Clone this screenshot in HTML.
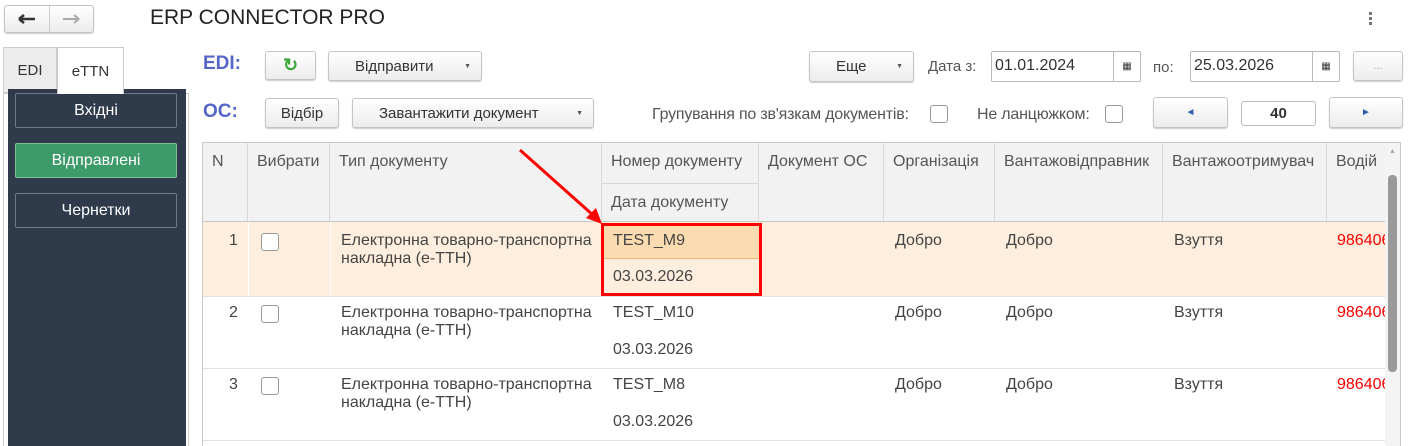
<!DOCTYPE html>
<html><head><meta charset="utf-8"><style>
*{box-sizing:border-box;margin:0;padding:0}
html,body{width:1408px;height:446px;overflow:hidden}
body{background:#fff;font-family:"Liberation Sans",Arial,sans-serif;font-size:15px;color:#444;position:relative}
.a{position:absolute}
.btn{position:absolute;border:1px solid #c4c4c4;border-radius:3px;background:linear-gradient(#fff,#ececec);box-shadow:0 1px 1px rgba(0,0,0,.2);display:flex;align-items:center;justify-content:center;color:#333;font-size:15px}
.dd{position:absolute;right:10px;font-size:7px;color:#555}
.inp{position:absolute;border:1px solid #b9b9b9;border-radius:2px;background:#fff;font-size:16px;color:#333;padding:5px 3px}
.cal{position:absolute;right:0;top:0;bottom:0;width:27px;border-left:1px solid #b9b9b9;display:flex;align-items:center;justify-content:center;font-size:10px}
.cb{position:absolute;width:18px;height:18px;border:1px solid #999;border-radius:3px;background:#fff}
.sb{position:absolute;left:15px;width:162px;height:35px;border:1px solid #717a87;border-radius:2px;color:#fff;display:flex;align-items:center;justify-content:center;font-size:16px;background:#2f3a4b}
.hd{position:absolute;top:143px;height:79px;border-right:1px solid #d8d8d8;padding:10px 9px;color:#555;background:#f2f2f2;white-space:nowrap;overflow:hidden;font-size:16px}
.c{position:absolute;color:#444;white-space:nowrap;font-size:16px}
.hl{position:absolute;height:1px;background:#e2e2e2;left:203px;width:1182px}
</style></head><body>
<div class="btn" style="left:4px;top:5px;width:90px;height:28px;justify-content:flex-start">
 <svg width="44" height="26"><path d="M14 13h16M14 13l5-4M14 13l5 4" stroke="#333" stroke-width="2.5" fill="none"/></svg><span style="width:1px;height:26px;background:#ccc"></span><svg width="44" height="26"><path d="M14 13h16M30 13l-5-4M30 13l-5 4" stroke="#aaa" stroke-width="2" fill="none"/></svg></div>
<div class="a" style="left:150px;top:6px;font-size:21px;color:#222">ERP CONNECTOR PRO</div>
<div class="a" style="left:1369px;top:12px;width:3px"><div style="width:3px;height:3px;background:#777;margin-bottom:2px"></div><div style="width:3px;height:3px;background:#777;margin-bottom:2px"></div><div style="width:3px;height:3px;background:#777"></div></div>

<div class="a" style="left:3px;top:47px;width:54px;height:46px;border:1px solid #ccc;background:#ececec;display:flex;align-items:center;justify-content:center;font-size:15px;color:#333">EDI</div>
<div class="a" style="left:57px;top:47px;width:67px;height:47px;border:1px solid #ccc;border-bottom:none;background:#fff;display:flex;align-items:center;justify-content:center;font-size:15px;color:#333;z-index:2">eTTN</div>
<div class="a" style="left:3px;top:93px;width:186px;height:353px;border:1px solid #ccc;border-bottom:none;background:#fff"></div>
<div class="a" style="left:8px;top:89px;width:178px;height:357px;background:#2f3a4b"></div>
<div class="sb" style="top:93px">Вхідні</div>
<div class="sb" style="top:143px;background:#3d9b69;border-color:#7fc09a">Відправлені</div>
<div class="sb" style="top:193px">Чернетки</div>

<div class="a" style="left:203px;top:53px;font-size:19px;font-weight:bold;color:#5566c8">EDI:</div>
<div class="btn" style="left:265px;top:51px;width:51px;height:29px;color:#3aa83a;font-size:18px;font-weight:bold">↻</div>
<div class="btn" style="left:328px;top:51px;width:154px;height:30px;justify-content:flex-start;padding-left:26px">Відправити<span class="dd">▼</span></div>
<div class="a" style="left:203px;top:101px;font-size:19px;font-weight:bold;color:#5566c8">ОС:</div>
<div class="btn" style="left:265px;top:98px;width:74px;height:30px">Відбір</div>
<div class="btn" style="left:352px;top:98px;width:242px;height:30px;justify-content:flex-start;padding-left:26px">Завантажити документ<span class="dd">▼</span></div>

<div class="btn" style="left:809px;top:51px;width:105px;height:31px;justify-content:flex-start;padding-left:26px">Еще<span class="dd">▼</span></div>
<div class="a" style="left:928px;top:58px;color:#555">Дата з:</div>
<div class="inp" style="left:991px;top:51px;width:150px;height:31px">01.01.2024<div class="cal">▦</div></div>
<div class="a" style="left:1153px;top:59px;color:#555">по:</div>
<div class="inp" style="left:1190px;top:51px;width:150px;height:31px">25.03.2026<div class="cal">▦</div></div>
<div class="btn" style="left:1353px;top:51px;width:50px;height:30px;color:#aaa;font-size:11px">...</div>

<div class="a" style="left:652px;top:106px;color:#555;font-size:16px;letter-spacing:-0.2px">Групування по зв'язкам документів:</div>
<div class="cb" style="left:930px;top:105px"></div>
<div class="a" style="left:977px;top:106px;color:#555;font-size:16px;letter-spacing:-0.2px">Не ланцюжком:</div>
<div class="cb" style="left:1105px;top:105px"></div>
<div class="btn" style="left:1153px;top:97px;width:75px;height:31px;color:#2d5fb0;font-size:10px">◄</div>
<div class="a" style="left:1241px;top:101px;width:75px;height:25px;border:1px solid #bbb;border-radius:3px;text-align:center;font-weight:bold;font-size:15px;color:#333;line-height:23px">40</div>
<div class="btn" style="left:1329px;top:97px;width:74px;height:31px;color:#2d5fb0;font-size:10px">►</div>

<div class="a" style="left:202px;top:142px;width:1199px;height:304px;border:1px solid #c8c8c8;border-bottom:none"></div>
<div class="hd" style="left:203px;width:45px">N</div>
<div class="hd" style="left:248px;width:82px">Вибрати</div>
<div class="hd" style="left:330px;width:272px">Тип документу</div>
<div class="hd" style="left:602px;width:157px;height:40px">Номер документу</div>
<div class="hd" style="left:602px;top:183px;width:157px;height:39px;border-top:1px solid #d8d8d8">Дата документу</div>
<div class="hd" style="left:759px;width:125px">Документ ОС</div>
<div class="hd" style="left:884px;width:111px">Організація</div>
<div class="hd" style="left:995px;width:168px">Вантажовідправник</div>
<div class="hd" style="left:1163px;width:164px">Вантажоотримувач</div>
<div class="hd" style="left:1327px;width:58px;border-right:none">Водій</div>
<div class="a" style="left:203px;top:221px;width:1182px;height:1px;background:#c8c8c8"></div>
<div class="a" style="left:1385px;top:143px;width:15px;height:303px;background:#f4f4f4"></div>
<div class="a" style="left:1389px;top:148px;font-size:7px;color:#aaa">▲</div>
<div class="a" style="left:1388px;top:175px;width:9px;height:197px;background:#9a9a9a;border-radius:4px"></div>

<div class="a" style="left:203px;top:222px;width:1182px;height:74px;background:#fdeedd"></div>
<div class="a" style="left:603px;top:225px;width:156px;height:34px;background:#fbdcb0;border-bottom:1px solid #f0b878"></div>
<div class="hl" style="top:296px"></div><div class="hl" style="top:368px"></div><div class="hl" style="top:440px"></div>
<div class="a" style="left:248px;top:222px;width:1px;height:74px;background:#fff"></div>
<div class="a" style="left:330px;top:222px;width:1px;height:74px;background:#fff"></div>

<div class="c" style="left:229px;top:232px">1</div><div class="cb" style="left:261px;top:233px"></div>
<div class="c" style="left:341px;top:232px;line-height:18px">Електронна товарно-транспортна<br>накладна (е-ТТН)</div>
<div class="c" style="left:613px;top:232px">TEST_M9</div><div class="c" style="left:613px;top:268px">03.03.2026</div>
<div class="c" style="left:895px;top:232px">Добро</div><div class="c" style="left:1006px;top:232px">Добро</div><div class="c" style="left:1174px;top:232px">Взуття</div>
<div class="c" style="left:1337px;top:232px;color:#f00;width:48px;overflow:hidden">9864067</div>

<div class="c" style="left:229px;top:304px">2</div><div class="cb" style="left:261px;top:305px"></div>
<div class="c" style="left:341px;top:304px;line-height:18px">Електронна товарно-транспортна<br>накладна (е-ТТН)</div>
<div class="c" style="left:613px;top:304px">TEST_M10</div><div class="c" style="left:613px;top:341px">03.03.2026</div>
<div class="c" style="left:895px;top:304px">Добро</div><div class="c" style="left:1006px;top:304px">Добро</div><div class="c" style="left:1174px;top:304px">Взуття</div>
<div class="c" style="left:1337px;top:304px;color:#f00;width:48px;overflow:hidden">9864067</div>

<div class="c" style="left:229px;top:376px">3</div><div class="cb" style="left:261px;top:377px"></div>
<div class="c" style="left:341px;top:376px;line-height:18px">Електронна товарно-транспортна<br>накладна (е-ТТН)</div>
<div class="c" style="left:613px;top:376px">TEST_M8</div><div class="c" style="left:613px;top:413px">03.03.2026</div>
<div class="c" style="left:895px;top:376px">Добро</div><div class="c" style="left:1006px;top:376px">Добро</div><div class="c" style="left:1174px;top:376px">Взуття</div>
<div class="c" style="left:1337px;top:376px;color:#f00;width:48px;overflow:hidden">9864067</div>

<div class="a" style="left:601px;top:223px;width:161px;height:73px;border:3px solid #f00"></div>
<svg class="a" style="left:510px;top:140px" width="100" height="90"><line x1="10" y1="10" x2="84" y2="76" stroke="#f00" stroke-width="3"/><polygon points="92,84 76,78 86,68" fill="#f00"/></svg>
</body></html>
